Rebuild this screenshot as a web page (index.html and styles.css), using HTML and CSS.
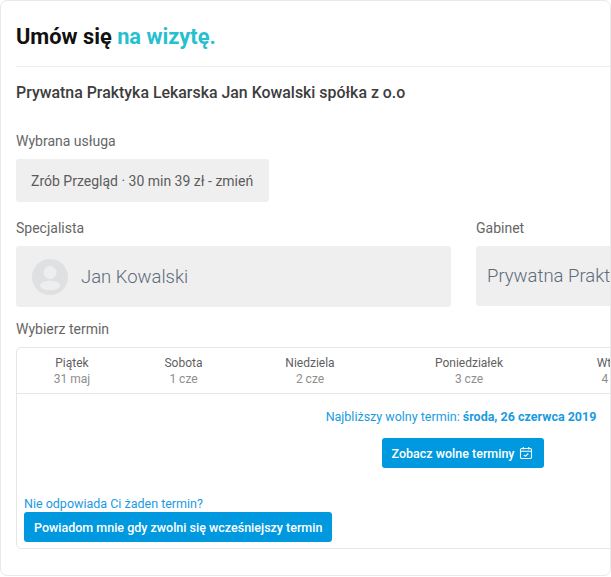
FILE: index.html
```html
<!DOCTYPE html>
<html lang="pl">
<head>
  <meta charset="UTF-8">
  <meta name="viewport" content="width=device-width, initial-scale=1.0">
  <title>Umów się na wizytę</title>
  <link rel="stylesheet" href="styles.css">
</head>
<body>
  <div class="karta">
    <h1 class="tytul">Umów się <span class="akcent">na wizytę.</span></h1>
    <h2 class="firma">Prywatna Praktyka Lekarska Jan Kowalski spółka z o.o</h2>

    <div class="etykieta etykieta-usluga">Wybrana usługa</div>
    <div class="usluga">Zrób Przegląd · 30 min 39 zł - zmień</div>

    <div class="wybor">
      <div class="kolumna-specjalista">
        <div class="etykieta">Specjalista</div>
        <div class="pole">
          <svg class="awatar" viewBox="0 0 36 36" aria-hidden="true">
            <circle cx="18" cy="18" r="18" fill="#dfe0e2"/>
            <circle cx="18" cy="13.500" r="6.500" fill="#eeeeee"/>
            <ellipse cx="18" cy="26.500" rx="10" ry="4.800" fill="#eeeeee"/>
          </svg>
          <span>Jan Kowalski</span>
        </div>
      </div>
      <div class="kolumna-gabinet">
        <div class="etykieta">Gabinet</div>
        <div class="pole pole-gabinet"><span>Prywatna Praktyka Lekarska</span></div>
      </div>
    </div>

    <div class="etykieta etykieta-termin">Wybierz termin</div>
    <div class="terminarz">
      <div class="dni">
        <div class="dzien">Piątek<small>31 maj</small></div>
        <div class="dzien">Sobota<small>1 cze</small></div>
        <div class="dzien">Niedziela<small>2 cze</small></div>
        <div class="dzien">Poniedziałek<small>3 cze</small></div>
        <div class="dzien">Wtorek<small>4 cze</small></div>
      </div>
      <div class="terminy">
        <div class="najblizszy">
          <p class="info">Najbliższy wolny termin: <b>środa, 26 czerwca 2019</b></p>
          <button class="przycisk">Zobacz wolne terminy
            <svg class="ikona" viewBox="0 0 14 14" aria-hidden="true">
              <rect x="1.500" y="2.500" width="11" height="10" rx="1.200"/>
              <path d="M1.500 5.200h11M4.300 1v2.600M9.700 1v2.600M4.800 8.800l1.600 1.500 2.900-2.800"/>
            </svg>
          </button>
        </div>
        <div class="powiadom">
          <p class="info">Nie odpowiada Ci żaden termin?</p>
          <button class="przycisk">Powiadom mnie gdy zwolni się wcześniejszy termin</button>
        </div>
      </div>
    </div>
  </div>
</body>
</html>
```

FILE: styles.css
```css
body {
  font-family: Roboto, "Liberation Sans", sans-serif;
  background-color: #fff;
  color: #5f5f5f;
  margin: 0;
  padding: 0;
  overflow: hidden;
}
.karta {
  box-sizing: border-box;
  width: 611px;
  height: 576px;
  padding: 0 0 0 15px;
  border: 1px solid #e9e9e9;
  border-radius: 7px;
  overflow: hidden;
}
.tytul {
  margin: 0 0 0 0;
  padding: 21px 0 15px;
  height: 29px;
  line-height: 29px;
  font-size: 21.800px;
  font-weight: 700;
  color: #111;
  border-bottom: 1px solid #ececec;
}
.akcent {
  color: #26c0cf;
}
.firma {
  margin: 16px 0 0;
  font-size: 15.900px;
  line-height: 19px;
  font-weight: 500;
  color: #3d3d3d;
}
.etykieta {
  font-size: 14px;
  line-height: 16px;
  color: #666;
}
.etykieta-usluga {
  margin-top: 31px;
}
.usluga {
  display: inline-block;
  margin-top: 10px;
  padding: 0 16px 0 15px;
  height: 43px;
  line-height: 44px;
  font-size: 14px;
  color: #5c5c5c;
  background-color: #efefef;
  border-radius: 3px;
}
.wybor {
  display: flex;
  gap: 25px;
  margin-top: 18px;
}
.kolumna-specjalista {
  flex: 0 0 435px;
}
.kolumna-gabinet {
  flex: 0 0 300px;
}
.pole {
  display: flex;
  align-items: center;
  gap: 13px;
  height: 61px;
  margin-top: 10px;
  padding-left: 16px;
  font-size: 18.500px;
  font-weight: 300;
  color: #5d6b7a;
  background-color: #efefef;
  border-radius: 3px;
  white-space: nowrap;
}
.pole-gabinet {
  height: 60px;
  padding-left: 11px;
}
.awatar {
  width: 36px;
  height: 36px;
}
.etykieta-termin {
  margin-top: 14px;
}
.terminarz {
  width: 640px;
  margin-top: 10px;
  border: 1px solid #e6e6e6;
  border-radius: 5px;
}
.dni {
  display: grid;
  grid-template-columns: 110px 113px 140px 178px 115px;
  padding: 7px 0 6px;
  border-bottom: 1px solid #e6e6e6;
}
.dzien {
  text-align: center;
  font-size: 12px;
  line-height: 16px;
  color: #5f5f5f;
}
.dzien small {
  display: block;
  font-size: 12px;
  color: #8e8e8e;
}
.terminy {
  display: flex;
  flex-direction: column;
  height: 148px;
  padding: 0 7px 6px;
  justify-content: space-between;
}
.najblizszy {
  display: flex;
  flex-direction: column;
  align-items: center;
  width: 272px;
  margin: 15px 0 0 301px;
}
.info {
  margin: 0;
  font-size: 12.500px;
  line-height: 15px;
  color: #1a9be0;
  white-space: nowrap;
}
.info b {
  font-weight: 700;
}
.przycisk {
  display: inline-flex;
  align-items: center;
  gap: 5px;
  height: 30px;
  padding: 0 11px 0 10px;
  font-family: inherit;
  font-size: 12.500px;
  font-weight: 500;
  color: #fff;
  background-color: #0099df;
  border: none;
  border-radius: 3px;
  white-space: nowrap;
}
.najblizszy .przycisk {
  margin: 14px 0 0 4px;
}
.powiadom .przycisk {
  margin-top: 1px;
  padding-right: 10px;
}
.ikona {
  width: 14px;
  height: 14px;
  fill: none;
  stroke: #fff;
  stroke-width: 1.100;
}
```
